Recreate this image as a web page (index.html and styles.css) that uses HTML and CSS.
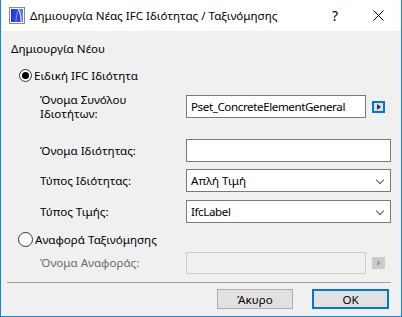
FILE: index.html
```html
<!DOCTYPE html>
<html lang="el">
<head>
  <meta charset="UTF-8">
  <title>Δημιουργία Νέας IFC Ιδιότητας / Ταξινόμησης</title>
  <link rel="stylesheet" href="styles.css">
</head>
<body>
  <div class="window">
    <div class="titlebar">
      <svg class="app-icon" width="16" height="17" viewBox="0 0 16 17">
        <defs>
          <linearGradient id="ig" x1="0" y1="0" x2="1" y2="0">
            <stop offset="0" stop-color="#1a2fd8"/>
            <stop offset="1" stop-color="#5a7cf5"/>
          </linearGradient>
        </defs>
        <rect x="0.5" y="0.5" width="15" height="16" fill="#fff" stroke="#8a8a8a"/>
        <rect x="2" y="2" width="12" height="13" fill="url(#ig)"/>
        <path d="M3 15 C4 8 6 3 9 2 C11 4 12 9 12 15 Z" fill="#2b3ff0"/>
        <path d="M9 2 C11 4 12 9 12 15" fill="none" stroke="#dde4ff" stroke-width="1.2"/>
        <path d="M7 15 C7 10 8 6 9 4" fill="none" stroke="#7f9bff" stroke-width="1"/>
      </svg>
      <span class="title">Δημιουργία Νέας IFC Ιδιότητας / Ταξινόμησης</span>
      <span class="help">?</span>
      <svg class="close" width="11" height="11" viewBox="0 0 11 11">
        <path d="M0.5 0.5 L10.5 10.5 M10.5 0.5 L0.5 10.5" stroke="#000" stroke-width="1"/>
      </svg>
    </div>
    <div class="content">
      <div class="section-title">Δημιουργία Νέου</div>
      <div class="radio-row">
        <span class="radio checked"></span>
        <span>Ειδική IFC Ιδιότητα</span>
      </div>
      <div class="fields">
        <div class="row first">
          <div class="label">Όνομα Συνόλου<br>Ιδιοτήτων:</div>
          <div class="input short latin">Pset_ConcreteElementGeneral</div>
          <div class="arrow-btn"><span class="tri"></span></div>
        </div>
        <div class="row name">
          <div class="label">Όνομα Ιδιότητας:</div>
          <div class="input"></div>
        </div>
        <div class="row type">
          <div class="label">Τύπος Ιδιότητας:</div>
          <div class="input select">Απλή Τιμή<span class="chev"></span></div>
        </div>
        <div class="row value">
          <div class="label">Τύπος Τιμής:</div>
          <div class="input select latin">IfcLabel<span class="chev"></span></div>
        </div>
      </div>
      <div class="radio-row second">
        <span class="radio"></span>
        <span>Αναφορά Ταξινόμησης</span>
      </div>
      <div class="fields">
        <div class="row ref disabled">
          <div class="label">Όνομα Αναφοράς:</div>
          <div class="input short"></div>
          <div class="arrow-btn"><span class="tri"></span></div>
        </div>
      </div>
      <div class="separator"></div>
      <div class="buttons">
        <button class="btn">Άκυρο</button>
        <button class="btn default">OK</button>
      </div>
    </div>
  </div>
</body>
</html>
```

FILE: styles.css
```css
body {
  margin: 0;
  font-family: "Noto Sans", "Open Sans", sans-serif;
  font-size: 11.6px;
  color: #000;
  background: #fff;
}
.window {
  width: 400px;
  height: 316px;
  border: 1px solid #1883d7;
  border-top: none;
  background: #f0f0f0;
  display: flex;
  flex-direction: column;
}
.titlebar {
  height: 31px;
  background: #fff;
  display: flex;
  align-items: center;
  flex-shrink: 0;
}
.app-icon {
  margin-left: 8px;
  margin-right: 5px;
}
.title {
  flex: 1;
}
.help {
  font-size: 14px;
  margin-right: 35px;
}
.close {
  margin-right: 17px;
}
.content {
  padding: 0 10px 0 0;
}
.section-title {
  height: 16px;
  line-height: 16px;
  margin: 10px 0 0 10px;
}
.radio-row {
  height: 16px;
  margin: 10px 0 0 18px;
  display: flex;
  align-items: center;
  gap: 2px;
}
.radio-row.second {
  margin-top: 8px;
  margin-left: 17px;
}
.radio {
  width: 11px;
  height: 11px;
  border: 1px solid #333;
  border-radius: 50%;
  background: #fff;
  position: relative;
}
.second .radio {
  width: 13px;
  height: 13px;
}
.radio.checked:after {
  content: "";
  position: absolute;
  left: 2px;
  top: 2px;
  width: 7px;
  height: 7px;
  border-radius: 50%;
  background: #000;
}
.fields {
  margin-left: 39px;
}
.row {
  display: flex;
  align-items: center;
  height: 23px;
}
.row.first { margin-top: 12px; }
.row.name { margin-top: 21px; }
.row.type { margin-top: 7px; }
.row.value { margin-top: 8px; }
.row.ref { margin-top: 5px; height: 22px; }
.label {
  width: 146px;
  flex-shrink: 0;
  line-height: 14px;
}
.input {
  flex: 1;
  height: 21px;
  border: 1px solid #7a7a7a;
  background: #fff;
  line-height: 21px;
  padding-left: 4px;
  position: relative;
}
.input.short {
  flex: none;
  width: 174px;
}
.latin {
  letter-spacing: -0.4px;
}
.arrow-btn {
  width: 9px;
  height: 8px;
  margin-left: 6px;
  border: 2px solid #0078d7;
  background: #e1e1e1;
  display: flex;
  align-items: center;
  justify-content: center;
}
.tri {
  width: 0;
  height: 0;
  border-left: 4px solid #333;
  border-top: 3.5px solid transparent;
  border-bottom: 3.5px solid transparent;
}
.chev {
  position: absolute;
  right: 7px;
  top: 7px;
  width: 5px;
  height: 5px;
  border-right: 1px solid #555;
  border-bottom: 1px solid #555;
  transform: rotate(45deg);
}
.disabled .label {
  color: #6d6d6d;
}
.disabled .input {
  height: 20px;
  border-color: #cccccc;
  background: #f0f0f0;
}
.disabled .arrow-btn {
  border: 1px solid #cccccc;
  background: #cccccc;
  width: 11px;
  height: 10px;
}
.disabled .tri {
  border-left-color: #a0a0a0;
}
.separator {
  height: 1px;
  background: #a0a0a0;
  margin: 8px 0 0 6px;
}
.buttons {
  display: flex;
  justify-content: flex-end;
  gap: 19px;
  margin-top: 6px;
  padding-right: 2px;
}
.btn {
  width: 76px;
  height: 20px;
  border: 1px solid #adadad;
  background: #e1e1e1;
  font-family: inherit;
  font-size: 11.6px;
  padding: 0;
  color: #000;
}
.btn.default {
  width: 77px;
  border: 2px solid #0078d7;
}
```
